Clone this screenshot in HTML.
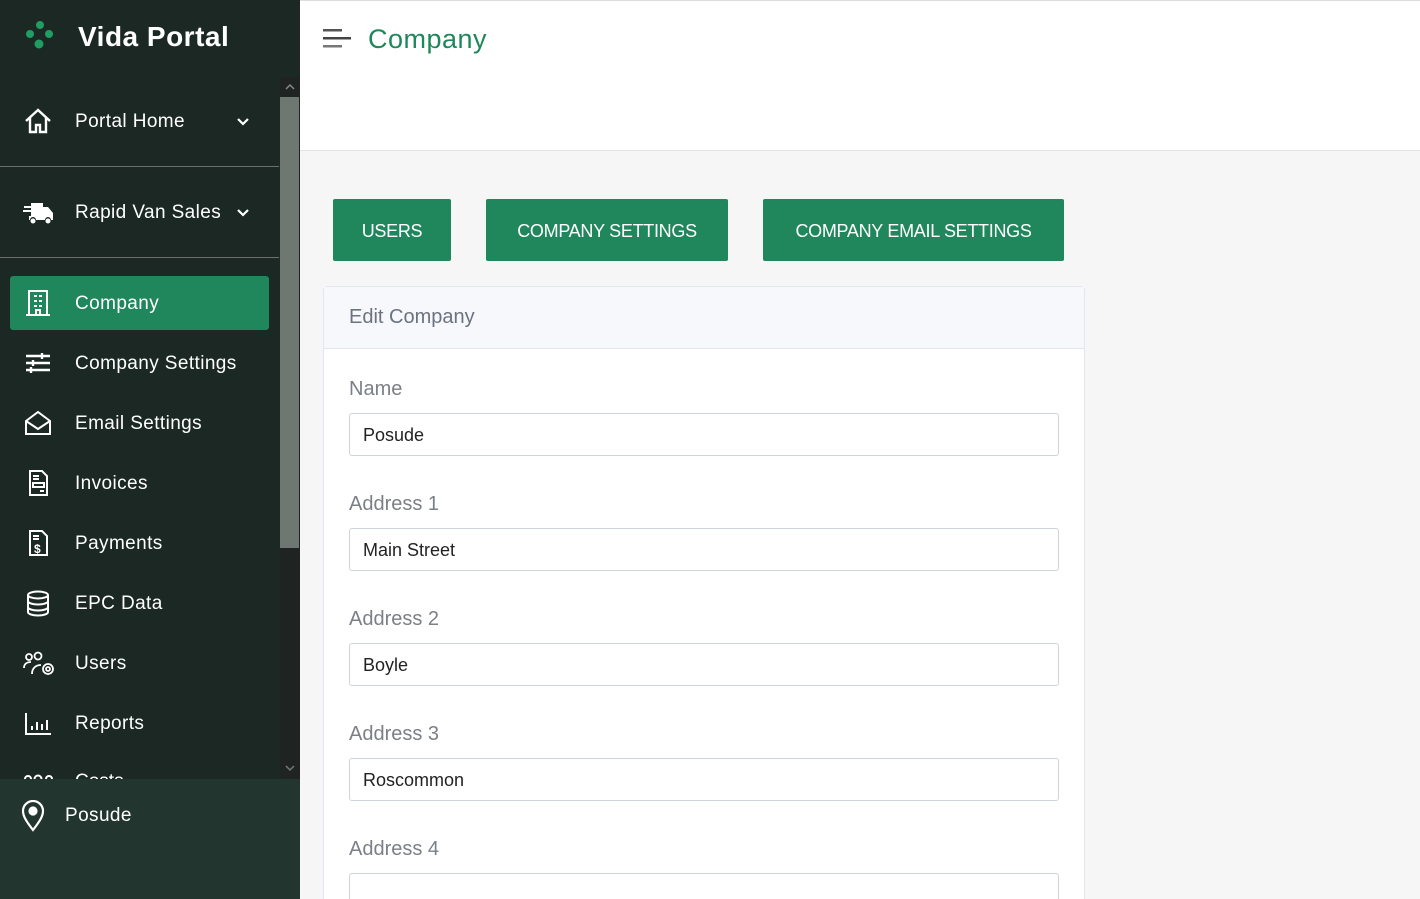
<!DOCTYPE html>
<html style="width:1420px;height:899px;overflow:hidden"><head><meta charset="utf-8"><style>
*{box-sizing:border-box;margin:0;padding:0}
body{width:1420px;height:899px;overflow:hidden;font-family:"Liberation Sans",sans-serif;background:#f6f6f6;position:relative}
.sb{position:absolute;left:0;top:0;width:300px;height:899px;background:#1b2823}
.logo{position:absolute;left:78px;top:21px;color:#fff;font-size:28px;font-weight:bold;letter-spacing:0.5px}
.item{position:absolute;left:10px;width:259px;height:54px;color:#fff;font-size:19px;display:flex;align-items:center}
.item svg{position:absolute;left:13px}
.item span{position:absolute;left:65px;top:17px;letter-spacing:0.4px}
.act{background:#1f875b;border-radius:3px}
.hr{position:absolute;left:0;width:279px;height:1px;background:#6a6f6d}
.track{position:absolute;left:280px;top:77px;width:20px;height:702px;background:#1f2423}
.thumb{position:absolute;left:280px;top:97px;width:19px;height:451px;background:#6f7773}
.foot{position:absolute;left:0;top:779px;width:300px;height:120px;background:#22352f}
.top{position:absolute;left:300px;top:0;width:1120px;height:151px;background:#fff;border-top:1px solid #ddd;border-bottom:1px solid #e3e3e3}
.btn{position:absolute;top:199px;height:62px;background:#1f875b;color:#fff;font-size:18px;border-radius:2px;display:flex;align-items:center;justify-content:center;padding-top:2px;letter-spacing:-0.3px}
.card{position:absolute;left:323px;top:286px;width:762px;height:640px;background:#fff;border:1px solid #e3e6ee;border-radius:4px}
.ch{height:62px;background:#f7f8fb;border-bottom:1px solid #e3e6ee;color:#6b7280;font-size:20px;padding:19px 25px}
.lbl{position:absolute;left:25px;color:#7b7f86;font-size:20px}
.inp{position:absolute;left:25px;width:710px;height:43px;border:1px solid #ced4da;border-radius:3px;font-size:18px;color:#222;padding:11px 13px}
</style></head><body>
<div class="sb">
 <svg style="position:absolute;left:24px;top:20px" width="32" height="32" viewBox="0 0 32 32"><circle cx="16" cy="5" r="4" fill="#1f9e62"/><circle cx="6" cy="14" r="4" fill="#1f9e62"/><circle cx="25" cy="14" r="4" fill="#1f9e62"/><circle cx="15" cy="24" r="4.5" fill="#1f9e62"/></svg>
 <div class="logo">Vida Portal</div>
 <div class="item" style="top:94px"><svg width="30" height="30" viewBox="0 0 30 30" fill="none" stroke="#fff" stroke-width="2.4"><path d="M3 15 L15 4 L27 15 M7 12 V26 H13 V19 H17 V26 H23 V12"/></svg><span>Portal Home</span><svg style="left:225px" width="16" height="16" viewBox="0 0 16 16" fill="none" stroke="#fff" stroke-width="2.2"><path d="M3 6 L8 11 L13 6"/></svg></div>
 <div class="hr" style="top:166px"></div>
 <div class="item" style="top:185px"><svg width="32" height="30" viewBox="0 0 32 30" fill="#fff"><path d="M8 6 H20 V10 H25 L30 16 V23 H28 A3 3 0 0 0 22 23 H13 A3 3 0 0 0 7 23 H6 V19 H8Z"/><rect x="1" y="9" width="9" height="2"/><rect x="0" y="13" width="9" height="2"/><circle cx="10" cy="24" r="2.5"/><circle cx="25" cy="24" r="2.5"/></svg><span>Rapid Van Sales</span><svg style="left:225px" width="16" height="16" viewBox="0 0 16 16" fill="none" stroke="#fff" stroke-width="2.2"><path d="M3 6 L8 11 L13 6"/></svg></div>
 <div class="hr" style="top:257px"></div>
 <div class="item act" style="top:276px"><svg width="30" height="30" viewBox="0 0 30 30" fill="none" stroke="#fff" stroke-width="2"><rect x="6" y="3" width="18" height="24"/><path d="M3 27H27 M11 8h3 M16 8h3 M11 13h3 M16 13h3 M11 18h3 M16 18h3 M13 27v-5h4v5"/></svg><span>Company</span></div>
 <div class="item" style="top:336px"><svg width="30" height="30" viewBox="0 0 30 30" fill="none" stroke="#fff" stroke-width="2.4"><path d="M3 8H27 M3 15H27 M3 22H27 M19 5v6 M10 12v6 M8 19v6"/></svg><span>Company Settings</span></div>
 <div class="item" style="top:396px"><svg width="30" height="30" viewBox="0 0 30 30" fill="none" stroke="#fff" stroke-width="2"><path d="M3 13 L15 4 L27 13 V26 H3Z M3 13 L15 21 L27 13"/></svg><span>Email Settings</span></div>
 <div class="item" style="top:456px"><svg width="30" height="30" viewBox="0 0 30 30" fill="none" stroke="#fff" stroke-width="2"><path d="M7 3H19L24 8V27H7Z M10 8h6 M10 11h6 M10 15h11v4H10z M17 23h4"/></svg><span>Invoices</span></div>
 <div class="item" style="top:516px"><svg width="30" height="30" viewBox="0 0 30 30" fill="none" stroke="#fff" stroke-width="2"><path d="M7 3H19L24 8V27H7Z M10 8h6 M10 11h6"/><text x="11" y="25" font-size="12" font-weight="bold" fill="#fff" stroke="none" font-family="Liberation Sans">$</text></svg><span>Payments</span></div>
 <div class="item" style="top:576px"><svg width="30" height="30" viewBox="0 0 30 30" fill="none" stroke="#fff" stroke-width="2"><ellipse cx="15" cy="7" rx="10" ry="3.5"/><path d="M5 7V24c0 2 4.5 3.5 10 3.5s10-1.5 10-3.5V7 M5 13c0 2 4.5 3.5 10 3.5s10-1.5 10-3.5 M5 19c0 2 4.5 3.5 10 3.5s10-1.5 10-3.5"/></svg><span>EPC Data</span></div>
 <div class="item" style="top:636px"><svg width="34" height="30" viewBox="0 0 34 30" fill="none" stroke="#fff" stroke-width="1.8"><circle cx="6" cy="9" r="3"/><circle cx="15" cy="8" r="3.5"/><path d="M1 20c0-4 3-6 7-6 M9 26c0-6 4-9 9-9"/><circle cx="25" cy="21" r="5"/><circle cx="25" cy="21" r="2"/></svg><span>Users</span></div>
 <div class="item" style="top:696px"><svg width="30" height="30" viewBox="0 0 30 30" fill="none" stroke="#fff" stroke-width="2"><path d="M3 5V26H28 M9 22v-4 M14 22v-8 M19 22v-6 M24 22v-10"/></svg><span>Reports</span></div>
 <div style="position:absolute;left:0;top:770px;width:279px;height:9px;overflow:hidden"><svg style="position:absolute;left:23px;top:3px" width="32" height="10" viewBox="0 0 32 10" fill="none" stroke="#fff" stroke-width="2"><circle cx="5" cy="6" r="3"/><circle cx="15" cy="6" r="3.5"/><circle cx="26" cy="6" r="3"/></svg><div style="position:absolute;left:75px;top:1px;color:#fff;font-size:19px">Costs</div></div>
 <div class="track"></div><div class="thumb"></div>
 <svg style="position:absolute;left:284px;top:82px" width="12" height="10" viewBox="0 0 12 10" fill="none" stroke="#888" stroke-width="1.5"><path d="M2 7L6 3L10 7"/></svg>
 <svg style="position:absolute;left:284px;top:763px" width="12" height="10" viewBox="0 0 12 10" fill="none" stroke="#777" stroke-width="1.5"><path d="M2 3L6 7L10 3"/></svg>
 <div class="foot"><svg style="position:absolute;left:21px;top:21px" width="24" height="32" viewBox="0 0 24 32" fill="none" stroke="#fff" stroke-width="2.2"><path d="M12 30C5 21 2 16 2 11a10 10 0 0 1 20 0c0 5-3 10-10 19Z"/><circle cx="12" cy="11" r="3.5" fill="#fff"/></svg><div style="position:absolute;left:65px;top:26px;color:#fff;font-size:19px;letter-spacing:0.4px">Posude</div></div>
</div>
<div class="top">
 <svg style="position:absolute;left:23px;top:28px" width="30" height="22" viewBox="0 0 30 22"><rect x="0" y="0" width="19" height="2.5" fill="#555"/><rect x="0" y="8" width="28" height="2.5" fill="#444"/><rect x="0" y="16" width="19" height="2.5" fill="#777"/></svg>
 <div style="position:absolute;left:68px;top:23px;color:#1f875b;font-size:27px;letter-spacing:0.5px">Company</div>
</div>
<div class="btn" style="left:333px;width:118px">USERS</div>
<div class="btn" style="left:486px;width:242px">COMPANY SETTINGS</div>
<div class="btn" style="left:763px;width:301px">COMPANY EMAIL SETTINGS</div>
<div class="card">
 <div class="ch">Edit Company</div>
 <div class="lbl" style="top:91px">Name</div><div class="inp" style="top:126px">Posude</div>
 <div class="lbl" style="top:206px">Address 1</div><div class="inp" style="top:241px">Main Street</div>
 <div class="lbl" style="top:321px">Address 2</div><div class="inp" style="top:356px">Boyle</div>
 <div class="lbl" style="top:436px">Address 3</div><div class="inp" style="top:471px">Roscommon</div>
 <div class="lbl" style="top:551px">Address 4</div><div class="inp" style="top:586px"></div>
</div>
</body></html>
